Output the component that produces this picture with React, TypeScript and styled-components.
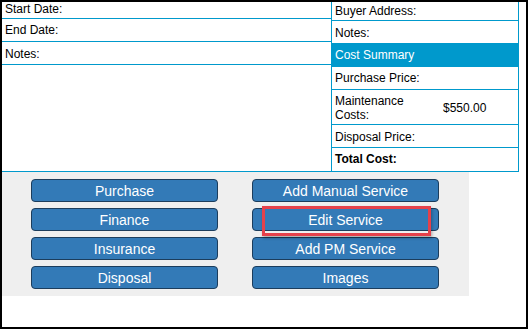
import styled, { createGlobalStyle } from 'styled-components';

const GlobalStyle = createGlobalStyle`
  body {
    margin: 0;
    font-family: "Liberation Sans", Arial, sans-serif;
    background: #fff;
  }
`;

const BLUE = '#0099cc';

const leftRows = [
  { label: 'Start Date:', h: 17, pt: 0 },
  { label: 'End Date:', h: 23, pt: 4 },
  { label: 'Notes:', h: 23, pt: 5 },
];

const buttons = [
  'Purchase',
  'Add Manual Service',
  'Finance',
  'Edit Service',
  'Insurance',
  'Add PM Service',
  'Disposal',
  'Images',
];

const App = () => {
  return (
    <>
      <GlobalStyle />
      <Frame>
        <Details>
          <LeftColumn>
            {leftRows.map((row) => (
              <Cell key={row.label} $h={row.h} $pt={row.pt}>
                {row.label}
              </Cell>
            ))}
          </LeftColumn>
          <RightColumn>
            <Cell $h={19} $pt={2}>Buyer Address:</Cell>
            <Cell $h={23} $pt={5}>Notes:</Cell>
            <HeaderCell $h={23} $pt={4}>Cost Summary</HeaderCell>
            <Cell $h={23} $pt={4}>Purchase Price:</Cell>
            <CostRow $h={35} $pt={4}>
              <CostLabel>Maintenance Costs:</CostLabel>
              <CostValue>$550.00</CostValue>
            </CostRow>
            <Cell $h={23} $pt={5}>Disposal Price:</Cell>
            <TotalCell $pt={4}>Total Cost:</TotalCell>
          </RightColumn>
        </Details>
        <ButtonPanel>
          {buttons.map((label) =>
            label === 'Edit Service' ? (
              <Marked key={label}>
                <ActionButton>{label}</ActionButton>
                <Highlight />
              </Marked>
            ) : (
              <ActionButton key={label}>{label}</ActionButton>
            )
          )}
        </ButtonPanel>
      </Frame>
    </>
  );
};
export default App;

const Frame = styled.div`
  width: 528px;
  height: 329px;
  box-sizing: border-box;
  border: 2px solid #000;
  background: #fff;
  display: flex;
  flex-direction: column;
  overflow: hidden;
`;

const Details = styled.div`
  display: grid;
  grid-template-columns: 329px 188px;
  width: 517px;
  height: 170px;
  box-sizing: border-box;
  border-bottom: 1px solid ${BLUE};
  font-size: 12px;
  line-height: 14px;
  color: #000;
`;

const LeftColumn = styled.div`
  display: flex;
  flex-direction: column;
`;

const RightColumn = styled.div`
  display: flex;
  flex-direction: column;
  border-left: 1px solid ${BLUE};
  border-right: 1px solid ${BLUE};
`;

const Cell = styled.div<{ $h?: number; $pt: number }>`
  height: ${({ $h }) => ($h ? `${$h}px` : 'auto')};
  box-sizing: border-box;
  padding: ${({ $pt }) => $pt}px 3px 0;
  border-bottom: 1px solid ${BLUE};
  white-space: nowrap;
`;

const HeaderCell = styled(Cell)`
  background: ${BLUE};
  color: #fff;
`;

const CostRow = styled(Cell)`
  display: flex;
  align-items: flex-start;
  white-space: normal;
`;

const CostLabel = styled.div`
  width: 102px;
`;

const CostValue = styled.div`
  padding-left: 6px;
  margin-top: 7px;
`;

const TotalCell = styled(Cell)`
  flex: 1;
  border-bottom: none;
  font-weight: 700;
`;

const ButtonPanel = styled.div`
  width: 467px;
  height: 124px;
  box-sizing: border-box;
  background: #efefef;
  padding: 7px 29px;
  display: grid;
  grid-template-columns: 187px 187px;
  grid-auto-rows: 23px;
  column-gap: 34px;
  row-gap: 6px;
`;

const ActionButton = styled.button`
  width: 187px;
  height: 23px;
  box-sizing: border-box;
  padding: 0;
  background: #337ab7;
  border: 1px solid #1c3d5c;
  border-radius: 4px;
  color: #fff;
  font-family: "Liberation Sans", Arial, sans-serif;
  font-size: 14px;
  line-height: 20px;
  text-align: center;
  cursor: pointer;
`;

const Marked = styled.div`
  position: relative;
`;

const Highlight = styled.div`
  position: absolute;
  left: 10px;
  top: -2px;
  width: 169px;
  height: 30px;
  box-sizing: border-box;
  border: 3px solid #e5414b;
  box-shadow: 1px 2px 3px rgba(0, 0, 0, 0.3);
  pointer-events: none;
`;
